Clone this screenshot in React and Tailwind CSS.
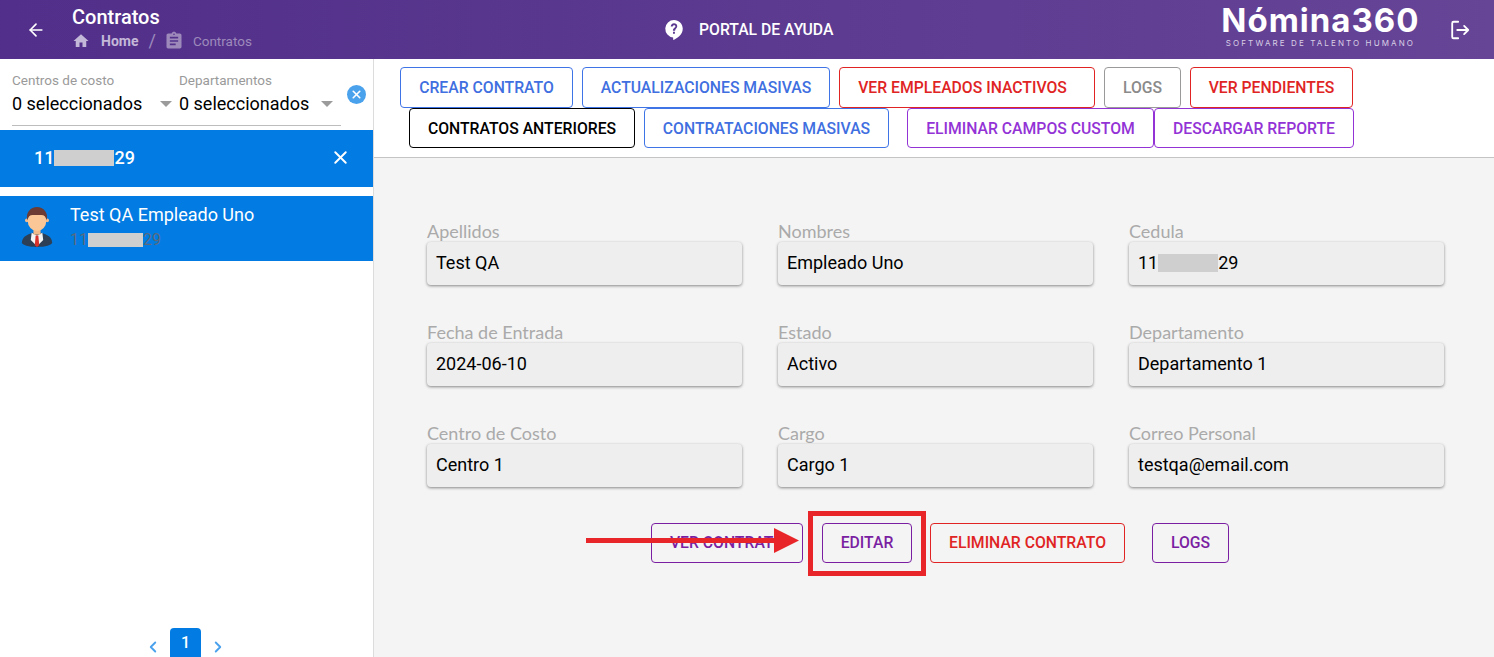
import { ArrowLeft, ChevronLeft, ChevronRight, X } from 'lucide-react';

const roboto = "font-['Roboto',sans-serif]";

const toolbarTop = [
    { label: 'CREAR CONTRATO', width: 'w-[173px]', tone: 'border-[#3f74e6] text-[#3f6fe0]', margin: 'ml-[26px]' },
    { label: 'ACTUALIZACIONES MASIVAS', width: 'w-[248px]', tone: 'border-[#3f74e6] text-[#3f6fe0]', margin: 'ml-[9px]' },
    { label: 'VER EMPLEADOS INACTIVOS', width: 'w-[256px]', tone: 'border-[#e02424] text-[#e02424]', margin: 'ml-[9px]', nudge: 'pr-[9px]' },
    { label: 'LOGS', width: 'w-[77px]', tone: 'border-[#9a9a9a] text-[#8a8a8a]', margin: 'ml-[9px]' },
    { label: 'VER PENDIENTES', width: 'w-[163px]', tone: 'border-[#e02424] text-[#e02424]', margin: 'ml-[9px]' },
];

const toolbarBottom = [
    { label: 'CONTRATOS ANTERIORES', width: 'w-[226px]', tone: 'border-black text-black', margin: 'ml-[35px]' },
    { label: 'CONTRATACIONES MASIVAS', width: 'w-[245px]', tone: 'border-[#3f74e6] text-[#3f6fe0]', margin: 'ml-[9px]' },
    { label: 'ELIMINAR CAMPOS CUSTOM', width: 'w-[247px]', tone: 'border-[#9333d6] text-[#9333d6]', margin: 'ml-[18px]' },
    { label: 'DESCARGAR REPORTE', width: 'w-[200px]', tone: 'border-[#9333d6] text-[#9333d6]', margin: '' },
];

const fields = [
    { label: 'Apellidos', value: 'Test QA' },
    { label: 'Nombres', value: 'Empleado Uno' },
    { label: 'Cedula', value: '11', masked: true },
    { label: 'Fecha de Entrada', value: '2024-06-10' },
    { label: 'Estado', value: 'Activo' },
    { label: 'Departamento', value: 'Departamento 1' },
    { label: 'Centro de Costo', value: 'Centro 1' },
    { label: 'Cargo', value: 'Cargo 1' },
    { label: 'Correo Personal', value: 'testqa@email.com' },
];

function OutlineButton({ label, width, tone, margin, height = 'h-[41px]', nudge = '' }) {
    return (
        <button className={`${width} ${height} ${tone} ${margin} ${nudge} shrink-0 rounded-[4px] border bg-transparent text-center text-[15.75px] font-medium ${roboto}`}>
            {label}
        </button>
    );
}

function Mask({ width, height = 'h-[16px]' }) {
    return <span className={`${width} ${height} inline-block bg-[#cfcfcf]`} />;
}

function Caret() {
    return <span className="h-0 w-0 border-x-[6px] border-t-[6px] border-x-transparent border-t-[#9b9b9b]" />;
}

function Avatar() {
    return (
        <svg width="32" height="43" viewBox="0 0 36 46">
            <path d="M1 40c0-6 6-9 12-11h10c6 2 12 5 12 11 0 3-8 5-17 5S1 43 1 40z" fill="#2c3f55" />
            <path d="M12 29l6 3 6-3 1 8-7 7-7-7z" fill="#f4f4f4" />
            <path d="M16.5 32h3l1 11-2.500 2-2.500-2z" fill="#d8322c" />
            <rect x="14" y="22" width="8" height="9" fill="#f0b98a" />
            <circle cx="6.500" cy="15" r="2" fill="#f2bb8d" />
            <circle cx="29.500" cy="15" r="2" fill="#f2bb8d" />
            <ellipse cx="18" cy="15" rx="10.500" ry="12" fill="#fbc796" />
            <path d="M7 15C5 6 11 0 18 0s13 6 11 15c-1-4-3-6-6-6H13c-3 0-5 2-6 6z" fill="#6b3b34" />
        </svg>
    );
}

function Logo() {
    return (
        <div className="flex w-[200px] flex-col items-center">
            <span className="font-['Inter',sans-serif] text-[33px] font-bold leading-[30px] tracking-[1px] text-white">Nómina360</span>
            <span className="mt-[4px] font-['Inter',sans-serif] text-[8px] leading-[9px] tracking-[2.1px] text-[#d9cfe6]">SOFTWARE DE TALENTO HUMANO</span>
        </div>
    );
}

export default function App() {
    return (
        <div className={`flex h-[657px] w-[1494px] flex-col overflow-hidden bg-white ${roboto}`}>
            <header className="flex h-[59px] shrink-0 items-center bg-gradient-to-r from-[#512f8a] to-[#664496] text-white">
                <ArrowLeft className="ml-[26px] size-[20px]" strokeWidth={2} />
                <div className="ml-[26px] flex w-[300px] flex-col">
                    <span className="mt-[1px] text-[20px] font-medium leading-[22px]">Contratos</span>
                    <div className="-mt-[1px] flex items-center text-sm leading-[18px]">
                        <svg width="18" height="18" viewBox="0 0 24 24" fill="#c4b8d8"><path d="M10 20v-6h4v6h5v-8h3L12 3 2 12h3v8z" /></svg>
                        <span className="ml-[11px] font-bold text-[#c4b8d8]">Home</span>
                        <span className="ml-[10px] text-lg text-[#9d8abb]">/</span>
                        <svg className="ml-[8px]" width="20" height="20" viewBox="0 0 24 24" fill="#9d8abb"><path d="M19 3h-4.180C14.400 1.840 13.300 1 12 1s-2.400.84-2.820 2H5c-1.100 0-2 .9-2 2v14c0 1.100.9 2 2 2h14c1.100 0 2-.9 2-2V5c0-1.100-.9-2-2-2zm-7 0c.55 0 1 .45 1 1s-.45 1-1 1-1-.45-1-1 .45-1 1-1zm2 14H7v-2h7v2zm3-4H7v-2h10v2zm0-4H7V7h10v2z" /></svg>
                        <span className="ml-[9px] text-[13.5px] text-[#9d8abb]">Contratos</span>
                    </div>
                </div>
                <div className="ml-[292px] flex items-center">
                    <svg width="20" height="22" viewBox="0 0 24 26" fill="white"><path d="M12 1a10.500 10.500 0 0 0-1 20.950V25c4-1.500 11.500-6 11.500-13.500C22.500 5.700 17.800 1 12 1zm1.100 16.500h-2.300v-2.300h2.300v2.300zm.2-3.600h-2.600c0-3.600 3-3.300 3-5.300 0-.8-.7-1.400-1.600-1.400S10.500 7.900 10.500 8.800H8.100c0-2.200 1.700-3.800 3.900-3.800s3.900 1.500 3.900 3.500c0 2.700-2.600 2.900-2.600 5.400z" /></svg>
                    <span className="ml-[15px] text-[15.75px] font-medium">PORTAL DE AYUDA</span>
                </div>
                <div className="ml-[387px] -mt-[6px]">
                    <Logo />
                </div>
                <svg className="ml-[29px]" width="22" height="22" viewBox="0 0 24 24" fill="none" stroke="white" strokeWidth="2" strokeLinecap="round" strokeLinejoin="round">
                    <path d="M10 3H5a1.500 1.500 0 0 0-1.500 1.500v15A1.500 1.500 0 0 0 5 21h5" />
                    <path d="M9 12h12M16.500 7.500 21 12l-4.500 4.500" />
                </svg>
            </header>

            <div className="flex min-h-0 flex-1">
                <aside className="relative flex w-[374px] shrink-0 flex-col border-r border-[#dcdcdc] bg-white">
                    <div className="ml-[12px] flex h-[67px] w-[329px] border-b border-[#bdbdbd] pt-[13px]">
                        <div className="flex w-[167px] flex-col">
                            <span className="text-[13.5px] leading-[16px] text-[#9a9a9a]">Centros de costo</span>
                            <div className="mt-[4px] flex items-center text-lg leading-[24px] text-black">
                                <span>0 seleccionados</span>
                                <span className="ml-[18px] flex"><Caret /></span>
                            </div>
                        </div>
                        <div className="flex flex-col">
                            <span className="text-[13.5px] leading-[16px] text-[#9a9a9a]">Departamentos</span>
                            <div className="mt-[4px] flex items-center text-lg leading-[24px] text-black">
                                <span>0 seleccionados</span>
                                <span className="ml-[12px] flex"><Caret /></span>
                            </div>
                        </div>
                    </div>
                    <span className="absolute left-[347px] top-[26px] flex size-[19px] items-center justify-center rounded-full bg-[#4aa1ec]">
                        <X className="size-[13px] text-white" strokeWidth={3} />
                    </span>

                    <div className="mt-[4px] flex h-[57px] items-center bg-[#027ce3] pb-[2px] text-white">
                        <span className="ml-[34px] flex w-[296px] items-center text-lg font-medium">
                            11<Mask width="w-[60px]" />29
                        </span>
                        <X className="size-[21px]" strokeWidth={2.2} />
                    </div>

                    <div className="mt-[9px] flex h-[65px] items-center bg-[#027ce3] pb-[2px]">
                        <div className="ml-[21px] flex"><Avatar /></div>
                        <div className="ml-[17px] flex flex-col">
                            <span className="text-lg leading-[24px] text-white">Test QA Empleado Uno</span>
                            <span className="mt-[1px] flex items-center text-base leading-[24px] text-[#5a6a7c]">
                                11<Mask width="w-[55px]" height="h-[14px]" />29
                            </span>
                        </div>
                    </div>

                    <div className="mt-auto flex items-start justify-center pr-[2px]">
                        <ChevronLeft className="mr-[8px] mt-[10px] size-[18px] text-[#4aa1ec]" strokeWidth={2.5} />
                        <span className="flex h-[29px] w-[31px] items-center justify-center rounded-t-[4px] bg-[#027ce3] text-base font-medium text-white">1</span>
                        <ChevronRight className="ml-[8px] mt-[10px] size-[18px] text-[#4aa1ec]" strokeWidth={2.5} />
                    </div>
                </aside>

                <main className="relative flex min-w-0 flex-1 flex-col bg-[#f4f4f4]">
                    <div className="h-[99px] shrink-0 border-b border-[#c4c4c4] bg-white pt-[8px]">
                        <div className="flex">
                            {toolbarTop.map((b) => (
                                <OutlineButton key={b.label} {...b} />
                            ))}
                        </div>
                        <div className="flex">
                            {toolbarBottom.map((b) => (
                                <OutlineButton key={b.label} {...b} height="h-[40px]" nudge="pt-[1px]" />
                            ))}
                        </div>
                    </div>

                    <div className="ml-[53px] mt-[63px] grid w-[1017px] grid-cols-3 gap-x-[36px] gap-y-[37px]">
                        {fields.map((f) => (
                            <div key={f.label} className="flex flex-col">
                                <span className="h-[21px] font-['Lato',sans-serif] text-[18px] leading-[20px] text-[#aaaaaa]">{f.label}</span>
                                <div className="flex h-[43px] items-center rounded-[4px] bg-[#eeeeee] pb-[2px] pl-[9px] text-lg text-black shadow-[0_1px_3px_rgba(0,0,0,0.45)]">
                                    {f.masked ? (
                                        <span className="flex items-center">11<Mask width="w-[60px]" height="h-[18px]" />29</span>
                                    ) : (
                                        f.value
                                    )}
                                </div>
                            </div>
                        ))}
                    </div>

                    <div className="ml-[277px] mt-[36px] flex">
                        <OutlineButton label="VER CONTRATO" width="w-[152px]" height="h-[40px]" tone="border-[#7b1fa2] text-[#7b1fa2]" margin="" />
                        <OutlineButton label="EDITAR" width="w-[90px]" height="h-[40px]" tone="border-[#7b1fa2] text-[#7b1fa2]" margin="ml-[19px]" />
                        <OutlineButton label="ELIMINAR CONTRATO" width="w-[195px]" height="h-[40px]" tone="border-[#e02424] text-[#e02424]" margin="ml-[18px]" />
                        <OutlineButton label="LOGS" width="w-[77px]" height="h-[40px]" tone="border-[#7b1fa2] text-[#7b1fa2]" margin="ml-[27px]" />
                    </div>

                    {/* annotation drawn over the buttons */}
                    <div className="absolute left-[434px] top-[452px] h-[65px] w-[118px] border-[5px] border-[#e8262a]" />
                    <svg className="absolute left-[212px] top-[464px]" width="216" height="38" viewBox="0 0 216 38">
                        <rect x="0" y="15" width="190" height="5" fill="#e8262a" />
                        <polygon points="188,5 213,17.500 188,30" fill="#e8262a" />
                    </svg>
                </main>
            </div>
        </div>
    );
}
